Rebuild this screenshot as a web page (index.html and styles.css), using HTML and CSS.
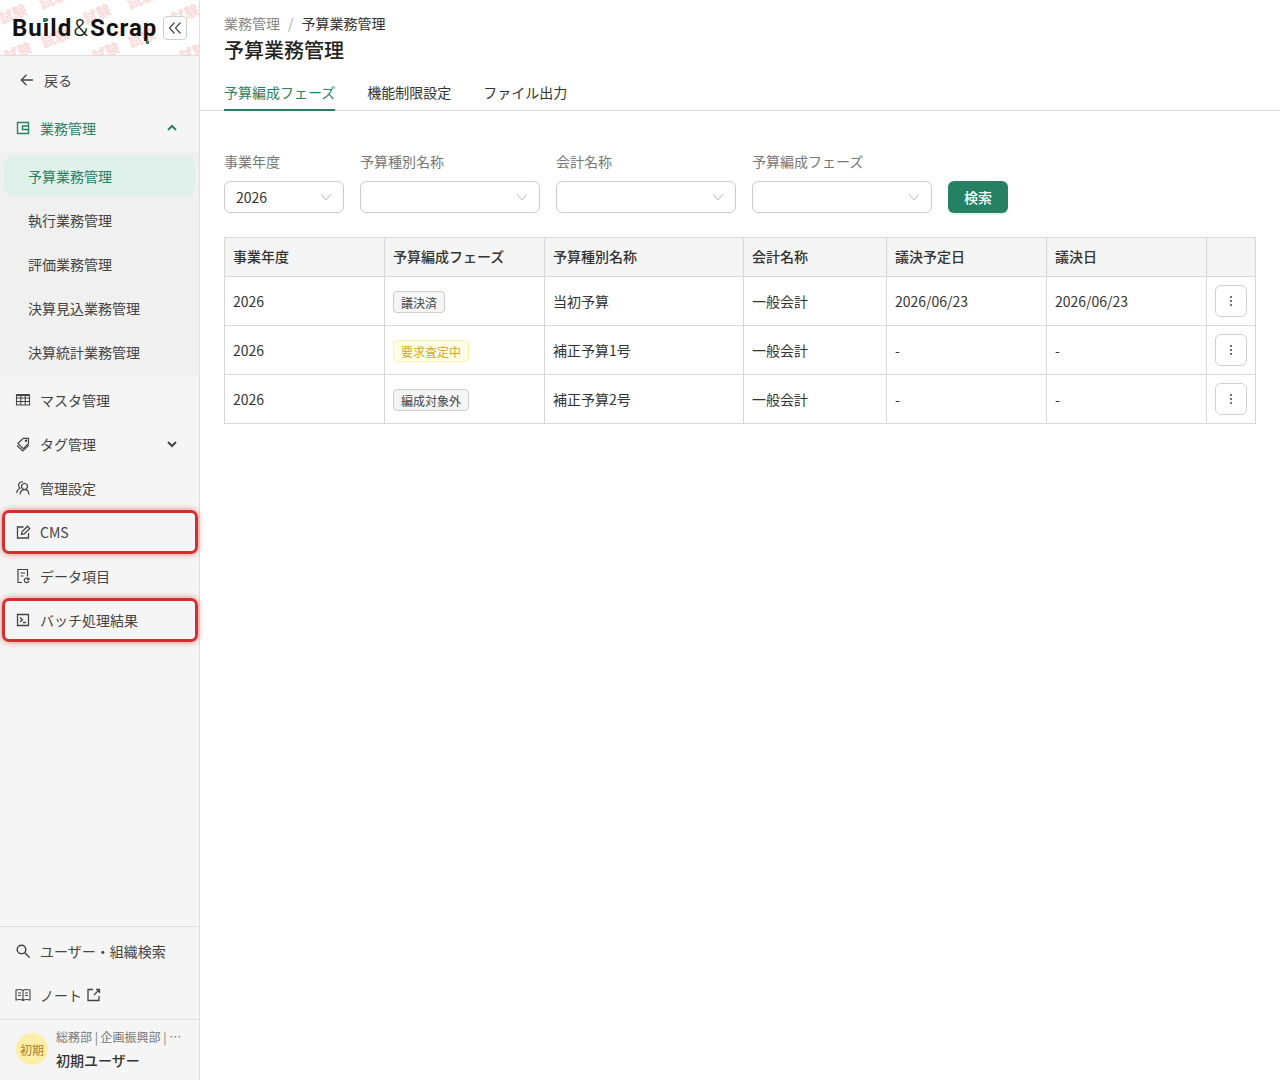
FILE: index.html
```html
<!DOCTYPE html>
<html lang="ja">
<head>
    <meta charset="UTF-8">
    <title>予算業務管理</title>
    <link rel="stylesheet" href="styles.css">
</head>
<body>
<div class="app">
    <aside class="sidebar">
        <div class="logo-bar">
            <svg class="watermark" width="199" height="55" viewBox="0 0 199 55" aria-hidden="true">
                <text transform="translate(55 4) rotate(-22)" text-anchor="middle">試験</text>
                <text transform="translate(143 4) rotate(-22)" text-anchor="middle">試験</text>
                <text transform="translate(15 19) rotate(-22)" text-anchor="middle">試験</text>
                <text transform="translate(99 19) rotate(-22)" text-anchor="middle">試験</text>
                <text transform="translate(187 19) rotate(-22)" text-anchor="middle">試験</text>
                <text transform="translate(57 43) rotate(-22)" text-anchor="middle">試験</text>
                <text transform="translate(144 43) rotate(-22)" text-anchor="middle">試験</text>
                <text transform="translate(20 57) rotate(-22)" text-anchor="middle">試験</text>
                <text transform="translate(108 57) rotate(-22)" text-anchor="middle">試験</text>
                <text transform="translate(195 57) rotate(-22)" text-anchor="middle">試験</text>
            </svg>
            <div class="logo">Build<span class="logo-amp">&amp;</span>Scrap<i class="logo-dot-i"></i><i class="logo-dot-p"></i></div>
            <button class="collapse-btn">
                <svg width="14" height="14" viewBox="0 0 14 14" fill="none" stroke="#444" stroke-width="1.2"><path d="M6.500 1.500 1.500 7l5 5.500M12.500 1.500 7.500 7l5 5.500"/></svg>
            </button>
        </div>

        <nav class="nav">
            <a class="nav-item nav-back">
                <svg class="icon" viewBox="0 0 16 16" fill="none" stroke="#444" stroke-width="1.3"><path d="M14 8H2.500M7.500 2.800 2.300 8l5.200 5.200"/></svg>
                戻る
            </a>
            <a class="nav-item is-open">
                <svg class="icon" viewBox="0 0 16 16" fill="none" stroke="#2a8063" stroke-width="1.4"><path d="M2.500 2.500h11v11h-11zM13.500 6H7.500v3.500H13.500"/></svg>
                業務管理
                <svg class="chevron" viewBox="0 0 12 12" fill="none" stroke="#2a8063" stroke-width="2"><path d="M2 8l4-4 4 4"/></svg>
            </a>
            <div class="subnav">
                <a class="sub-item is-active">予算業務管理</a>
                <a class="sub-item">執行業務管理</a>
                <a class="sub-item">評価業務管理</a>
                <a class="sub-item">決算見込業務管理</a>
                <a class="sub-item">決算統計業務管理</a>
            </div>
            <a class="nav-item">
                <svg class="icon" viewBox="0 0 16 16" fill="none" stroke="#444" stroke-width="1.1"><path d="M1.500 3h13v10h-13zM1.500 6h13M1.500 9.500h13M5.800 3v10M10.200 3v10"/><path d="M1.500 3h13" stroke-width="2"/></svg>
                マスタ管理
            </a>
            <a class="nav-item">
                <svg class="icon" viewBox="0 0 16 16" fill="none" stroke="#444" stroke-width="1.200"><path d="M3 7.500 8.200 2.300h5.300v5.200L8.300 12.700z"/><path d="M2 9.500 7.800 15l6-5.800"/><circle cx="11" cy="4.800" r=".7"/></svg>
                タグ管理
                <svg class="chevron" viewBox="0 0 12 12" fill="none" stroke="#444" stroke-width="2"><path d="M2 4l4 4 4-4"/></svg>
            </a>
            <a class="nav-item">
                <svg class="icon" viewBox="0 0 16 16" fill="none" stroke="#444" stroke-width="1.200"><circle cx="9.500" cy="6.500" r="3"/><path d="M5 14.500c.3-2.900 2-4.800 4.500-4.800s4.200 1.900 4.500 4.800"/><path d="M8 1.900C5.500 1.300 3.600 3 3.600 5.200c0 1.200.5 2.200 1.400 2.900-1.800 1-3 2.800-3.300 4.900"/></svg>
                管理設定
            </a>
            <a class="nav-item is-marked">
                <svg class="icon" viewBox="0 0 16 16" fill="none" stroke="#444" stroke-width="1.300"><path d="M13.500 9v5h-11V3h6"/><path d="M6.500 10.500l.5-2.800 5.500-5.500 2.200 2.200-5.500 5.600z"/></svg>
                CMS
            </a>
            <a class="nav-item">
                <svg class="icon" viewBox="0 0 16 16" fill="none" stroke="#444" stroke-width="1.200"><path d="M7 14.500H3v-13h9.500v7"/><path d="M5.500 5h4.500M5.500 8h3"/><path d="M13.600 11.200a2.300 2.300 0 1 0 .2 1.800M13.900 9.800v1.800h-1.800"/></svg>
                データ項目
            </a>
            <a class="nav-item is-marked">
                <svg class="icon" viewBox="0 0 16 16" fill="none" stroke="#444" stroke-width="1.300"><path d="M2.500 2.500h11v11h-11zM5 5.500l2.500 2.200L5 10M8 10.500h3"/></svg>
                バッチ処理結果
            </a>
        </nav>

        <div class="side-links">
            <a class="nav-item">
                <svg class="icon" viewBox="0 0 16 16" fill="none" stroke="#444" stroke-width="1.500"><circle cx="6.500" cy="6.500" r="4.300"/><path d="M9.800 9.800 14.500 14.500"/></svg>
                ユーザー・組織検索
            </a>
            <a class="nav-item">
                <svg class="icon" viewBox="0 0 16 16" fill="none" stroke="#444" stroke-width="1.100"><path d="M8 3.500C6.500 2.500 3 2.500 1 3v10c2-.5 5.500-.5 7 .5 1.500-1 5-1 7-.5V3c-2-.5-5.500-.5-7 .5zM8 3.500v10M3 6h3M3 8.500h3M10 6h3M10 8.500h3"/></svg>
                ノート
                <svg class="external" viewBox="0 0 14 14" fill="none" stroke="#444" stroke-width="1.300"><path d="M6 1.500H1v11h11V8M9 1.500h3.500V5M12.500 1.500 7 7"/></svg>
            </a>
        </div>

        <div class="user">
            <div class="avatar">初期</div>
            <div class="user-text">
                <div class="user-org">総務部 | 企画振興部 | …</div>
                <div class="user-name">初期ユーザー</div>
            </div>
        </div>
    </aside>

    <main class="main">
        <header class="page-head">
            <div class="crumbs"><span class="crumb-parent">業務管理</span><span class="crumb-sep">/</span><span>予算業務管理</span></div>
            <h1 class="page-title">予算業務管理</h1>
        </header>

        <div class="tabs">
            <a class="tab is-active">予算編成フェーズ</a>
            <a class="tab">機能制限設定</a>
            <a class="tab">ファイル出力</a>
        </div>

        <div class="content">
            <form class="filters">
                <label class="field field-year">
                    <span class="field-label">事業年度</span>
                    <span class="select">2026<svg class="select-arrow" viewBox="0 0 12 12" fill="none" stroke="#bbb"><path d="M1 3l5 6 5-6"/></svg></span>
                </label>
                <label class="field">
                    <span class="field-label">予算種別名称</span>
                    <span class="select"><svg class="select-arrow" viewBox="0 0 12 12" fill="none" stroke="#bbb"><path d="M1 3l5 6 5-6"/></svg></span>
                </label>
                <label class="field">
                    <span class="field-label">会計名称</span>
                    <span class="select"><svg class="select-arrow" viewBox="0 0 12 12" fill="none" stroke="#bbb"><path d="M1 3l5 6 5-6"/></svg></span>
                </label>
                <label class="field">
                    <span class="field-label">予算編成フェーズ</span>
                    <span class="select"><svg class="select-arrow" viewBox="0 0 12 12" fill="none" stroke="#bbb"><path d="M1 3l5 6 5-6"/></svg></span>
                </label>
                <button type="button" class="search-btn">検索</button>
            </form>

            <table class="budget-table">
                <colgroup>
                    <col class="col-160"><col class="col-160"><col class="col-199"><col class="col-143"><col class="col-160"><col class="col-160"><col>
                </colgroup>
                <thead>
                    <tr><th>事業年度</th><th>予算編成フェーズ</th><th>予算種別名称</th><th>会計名称</th><th>議決予定日</th><th>議決日</th><th></th></tr>
                </thead>
                <tbody>
                    <tr>
                        <td>2026</td>
                        <td><span class="tag">議決済</span></td>
                        <td>当初予算</td>
                        <td>一般会計</td>
                        <td>2026/06/23</td>
                        <td>2026/06/23</td>
                        <td class="cell-action"><button class="more-btn"><svg width="16" height="16" viewBox="0 0 16 16" fill="#444"><circle cx="8" cy="4" r="1"/><circle cx="8" cy="8" r="1"/><circle cx="8" cy="12" r="1"/></svg></button></td>
                    </tr>
                    <tr>
                        <td>2026</td>
                        <td><span class="tag tag-yellow">要求査定中</span></td>
                        <td>補正予算1号</td>
                        <td>一般会計</td>
                        <td class="cell-empty">-</td>
                        <td class="cell-empty">-</td>
                        <td class="cell-action"><button class="more-btn"><svg width="16" height="16" viewBox="0 0 16 16" fill="#444"><circle cx="8" cy="4" r="1"/><circle cx="8" cy="8" r="1"/><circle cx="8" cy="12" r="1"/></svg></button></td>
                    </tr>
                    <tr>
                        <td>2026</td>
                        <td><span class="tag">編成対象外</span></td>
                        <td>補正予算2号</td>
                        <td>一般会計</td>
                        <td class="cell-empty">-</td>
                        <td class="cell-empty">-</td>
                        <td class="cell-action"><button class="more-btn"><svg width="16" height="16" viewBox="0 0 16 16" fill="#444"><circle cx="8" cy="4" r="1"/><circle cx="8" cy="8" r="1"/><circle cx="8" cy="12" r="1"/></svg></button></td>
                    </tr>
                </tbody>
            </table>
        </div>
    </main>
</div>
</body>
</html>
```

FILE: styles.css
```css
/* Base */
* {
    box-sizing: border-box;
}

body {
    margin: 0;
    font-family: "Noto Sans CJK JP", "Noto Sans", sans-serif;
    font-size: 14px;
    color: #333;
    background: #fff;
}

.app {
    display: flex;
    height: 1080px;
    overflow: hidden;
}

/* Sidebar */
.sidebar {
    width: 200px;
    flex: none;
    display: flex;
    flex-direction: column;
    background: #f5f5f5;
    border-right: 1px solid #e0e0e0;
}

.logo-bar {
    position: relative;
    height: 56px;
    flex: none;
    display: flex;
    align-items: center;
    justify-content: space-between;
    padding: 0 12px;
    background: #fff;
    border-bottom: 1px solid #ddd;
    overflow: hidden;
}

.watermark {
    position: absolute;
    top: 0;
    left: 0;
    fill: #fbd9d9;
    font-size: 14px;
    font-weight: 700;
}

.logo {
    position: relative;
    font-family: Roboto, sans-serif;
    font-size: 24px;
    font-weight: 700;
    line-height: 32px;
    color: #111;
    letter-spacing: 1.05px;
}

.logo-amp {
    font-weight: 300;
    margin: 0 1px;
}

.logo-dot-i {
    position: absolute;
    left: 31px;
    top: 6px;
    width: 4px;
    height: 4px;
    background: #2a8063;
}

.logo-dot-p {
    position: absolute;
    left: 134px;
    top: 29px;
    width: 3px;
    height: 3px;
    background: #2a8063;
}

.collapse-btn {
    position: relative;
    width: 24px;
    height: 24px;
    padding: 0;
    display: flex;
    align-items: center;
    justify-content: center;
    background: #fff;
    border: 1px solid #ccc;
    border-radius: 4px;
}

.nav {
    flex: 1;
    padding-top: 2px;
}

.nav-item {
    display: flex;
    align-items: center;
    height: 44px;
    margin: 0 3px;
    padding: 0 13px 0 12px;
    gap: 9px;
    color: #444;
    line-height: 1;
}

.nav-back {
    padding-left: 16px;
    margin-bottom: 4px;
}

.icon {
    width: 16px;
    height: 16px;
    flex: none;
}

.chevron {
    width: 12px;
    height: 12px;
    margin-left: auto;
    margin-right: 5px;
}

.external {
    width: 14px;
    height: 14px;
    margin-left: -4px;
}

.is-open {
    color: #2a8063;
}

.is-marked {
    margin: 0 1.5px;
    padding: 0 10.5px;
    border: 3px solid #d32f2f;
    border-radius: 7px;
    box-shadow: 0 0 6px rgba(211, 47, 47, .6);
}

.subnav {
    margin: 2px 0;
    padding: 2px 0;
    background: #f0f0f0;
}

.sub-item {
    display: flex;
    align-items: center;
    height: 44px;
    padding-left: 28px;
    color: #444;
}

.sub-item.is-active {
    height: 40px;
    margin: 2px 4px;
    padding-left: 24px;
    color: #2a8063;
    background: #e0f0ea;
    border-radius: 8px;
}

.side-links {
    flex: none;
    padding: 2px 0;
    border-top: 1px solid #ddd;
}

.user {
    flex: none;
    height: 61px;
    display: flex;
    align-items: center;
    gap: 8px;
    padding: 0 16px 2px;
    border-top: 1px solid #ddd;
}

.avatar {
    width: 32px;
    height: 32px;
    flex: none;
    display: flex;
    align-items: center;
    justify-content: center;
    border-radius: 50%;
    background: #fdeea8;
    color: #a5802a;
    font-size: 12px;
}

.user-org {
    font-size: 12px;
    line-height: 18px;
    color: #777;
    white-space: nowrap;
}

.user-name {
    margin-top: 4px;
    line-height: 20px;
    font-weight: 500;
    color: #333;
}

/* Main */
.main {
    flex: 1;
    min-width: 0;
}

.page-head {
    padding: 13px 24px 0;
}

.crumbs {
    line-height: 20px;
    color: #333;
}

.crumb-parent {
    color: #888;
}

.crumb-sep {
    margin: 0 8px;
    color: #aaa;
}

.page-title {
    margin: 4px 0 0;
    font-size: 20px;
    font-weight: 500;
    line-height: 26px;
    color: #222;
}

.tabs {
    display: flex;
    gap: 32px;
    margin-top: 12px;
    padding: 0 24px;
    height: 36px;
    border-bottom: 1px solid #ddd;
}

.tab {
    height: 36px;
    padding-top: 7px;
    color: #333;
    line-height: 20px;
}

.tab.is-active {
    color: #2a8063;
    border-bottom: 2px solid #2a8063;
}

.content {
    padding: 40px 24px 0;
}

.filters {
    display: flex;
    align-items: flex-end;
    gap: 16px;
}

.field {
    display: flex;
    flex-direction: column;
    gap: 10px;
    width: 180px;
}

.field-year {
    width: 120px;
}

.field-label {
    line-height: 20px;
    color: #777;
}

.select {
    position: relative;
    height: 32px;
    padding-left: 11px;
    line-height: 31px;
    color: #333;
    background: #fff;
    border: 1px solid #ccc;
    border-radius: 6px;
}

.select-arrow {
    position: absolute;
    top: 9px;
    right: 11px;
    width: 12px;
    height: 12px;
}

.search-btn {
    width: 60px;
    height: 32px;
    padding: 0;
    font-family: inherit;
    font-size: 14px;
    font-weight: 500;
    color: #fff;
    background: #268062;
    border: 0;
    border-radius: 6px;
    box-shadow: 0 2px 0 #e3f3ee;
}

/* Table */
.budget-table {
    width: 1032px;
    margin-top: 24px;
    border-collapse: collapse;
    table-layout: fixed;
}

.col-160 { width: 160px; }
.col-199 { width: 199px; }
.col-143 { width: 143px; }

.budget-table th,
.budget-table td {
    padding: 0 8px;
    border: 1px solid #d8d8d8;
    text-align: left;
}

.budget-table th {
    height: 39px;
    padding-bottom: 2px;
    background: #f5f5f5;
    font-weight: 500;
    color: #333;
}

.budget-table td {
    height: 49px;
    color: #333;
}

.cell-empty {
    color: #777;
}

.tag {
    display: inline-block;
    height: 22px;
    margin-top: 2px;
    padding: 0 7px;
    font-size: 12px;
    line-height: 21px;
    color: #444;
    background: #f5f5f5;
    border: 1px solid #ccc;
    border-radius: 4px;
}

.tag-yellow {
    color: #d4a72c;
    background: #fffde5;
    border-color: #fdf3b0;
}

.more-btn {
    width: 32px;
    height: 32px;
    padding: 0;
    display: flex;
    align-items: center;
    justify-content: center;
    background: #fff;
    border: 1px solid #d0d0d0;
    border-radius: 6px;
}
```
